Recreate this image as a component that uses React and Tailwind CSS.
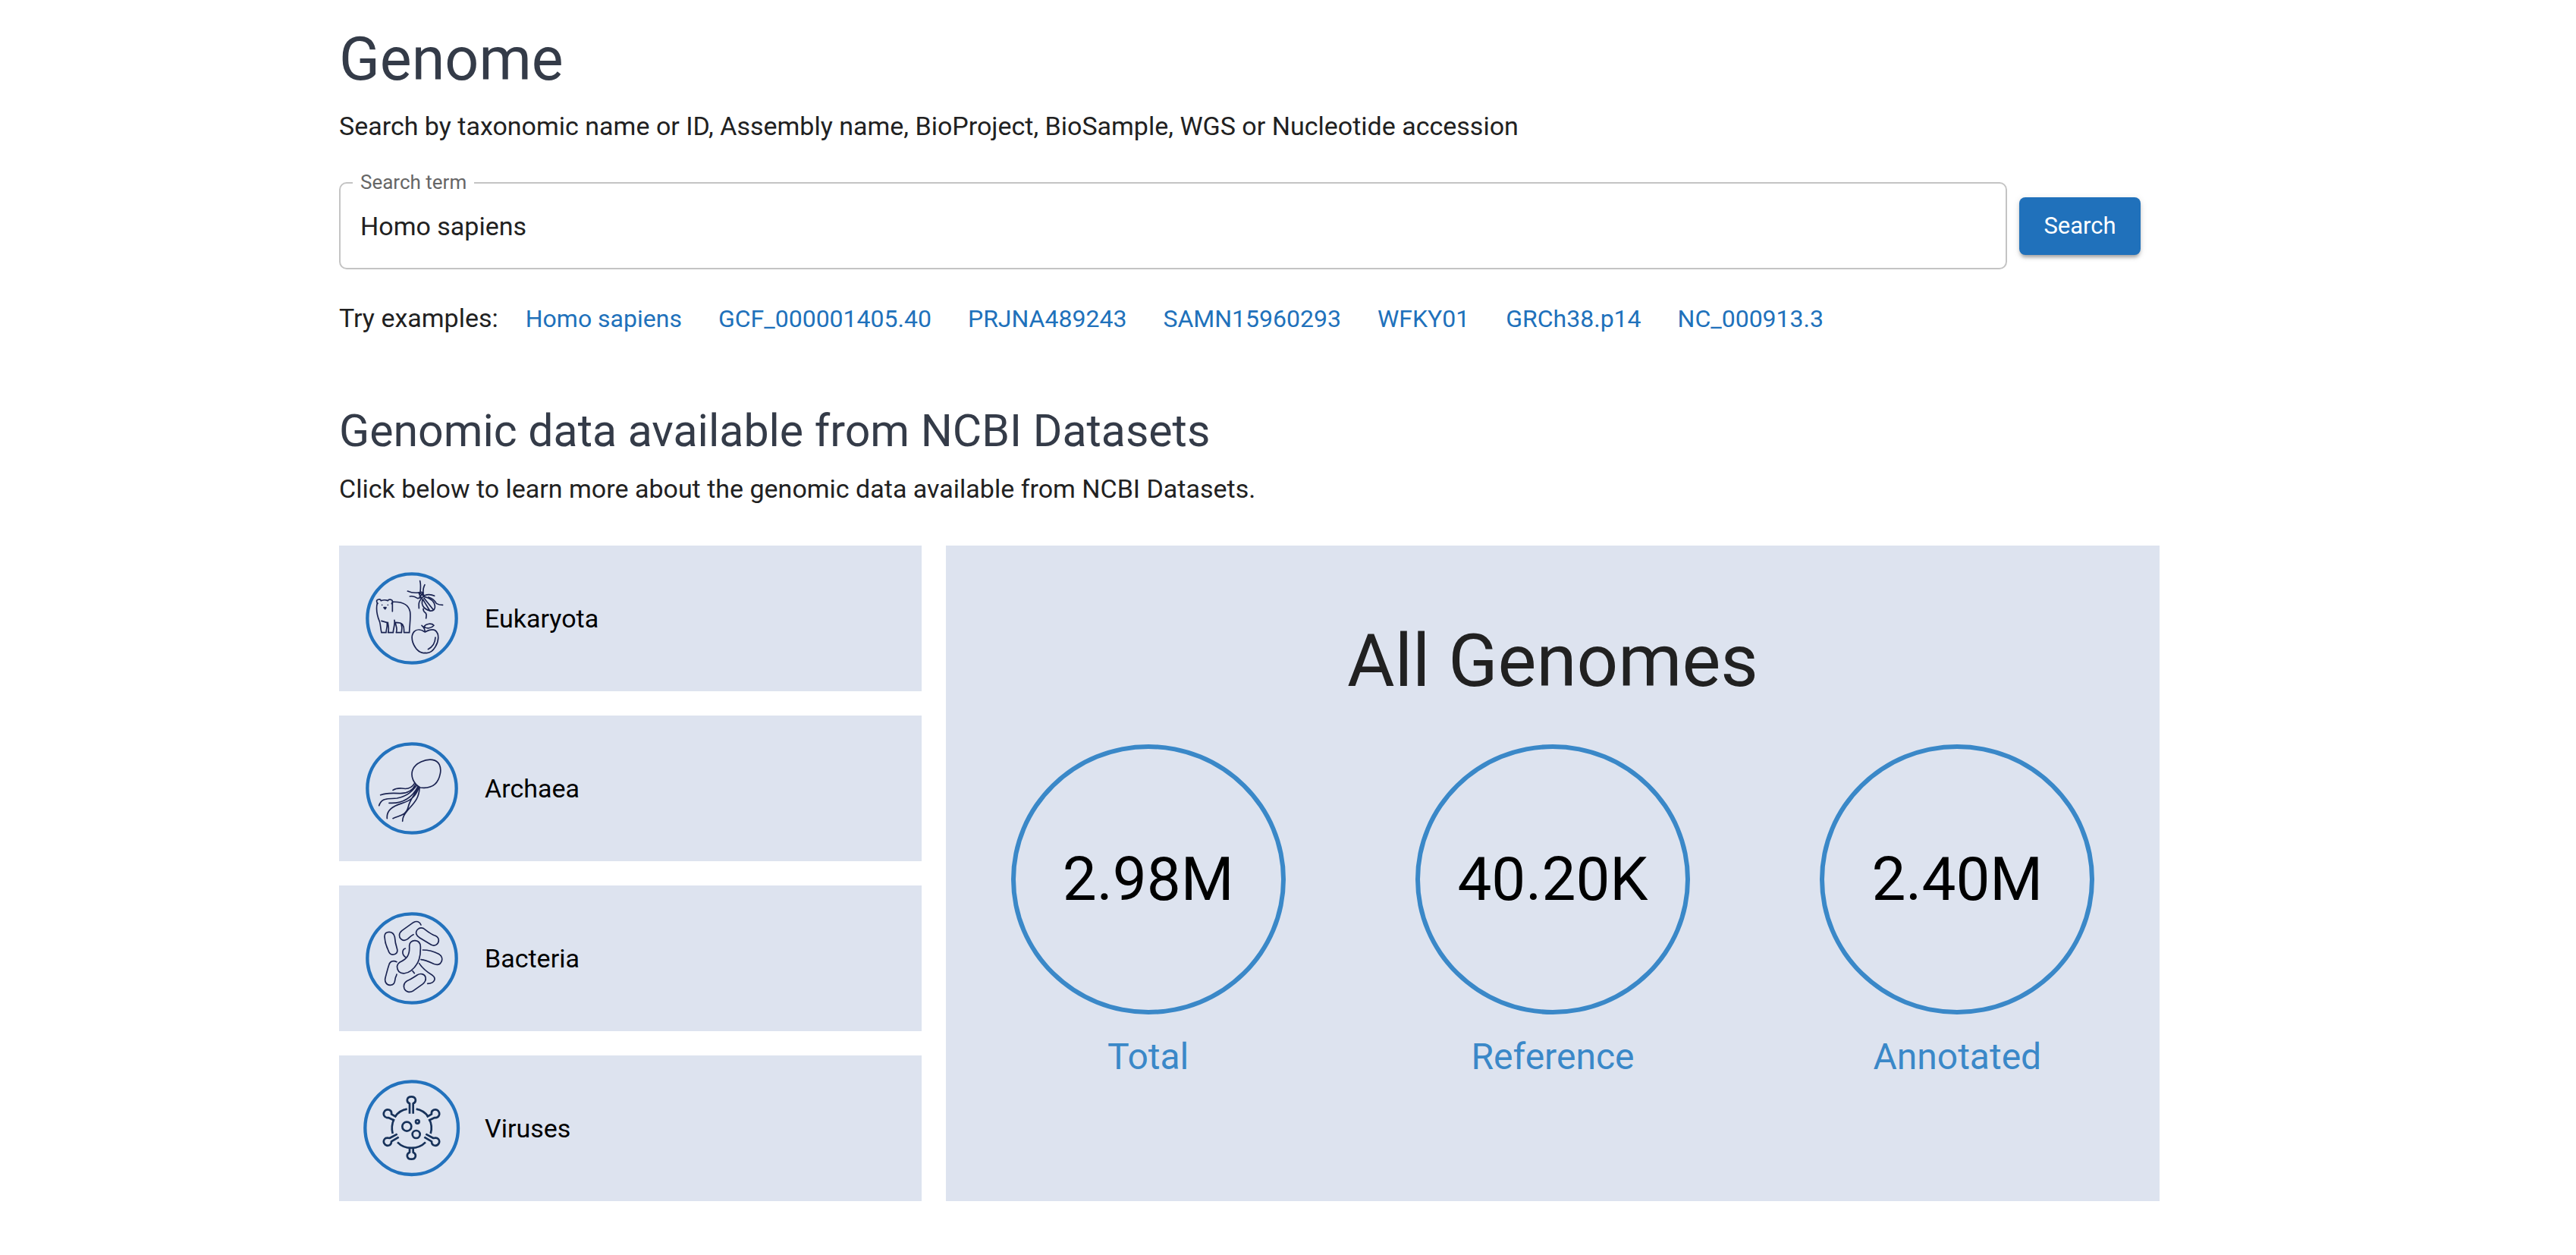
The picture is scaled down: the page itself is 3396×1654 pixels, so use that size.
const examples = [
  "Homo sapiens",
  "GCF_000001405.40",
  "PRJNA489243",
  "SAMN15960293",
  "WFKY01",
  "GRCh38.p14",
  "NC_000913.3",
];

function Icon({ viewBox, ring, children, stroke = "#1b2452", width = 5 }) {
  return (
    <svg viewBox={viewBox} className="size-32 shrink-0" fill="none" strokeLinecap="round" strokeLinejoin="round" aria-hidden="true">
      <circle cx={ring[0]} cy={ring[1]} r={ring[2]} stroke="#2272bd" strokeWidth="13" />
      <g stroke={stroke} strokeWidth={width}>{children}</g>
    </svg>
  );
}

function EukaryotaIcon() {
  return (
    <Icon viewBox="27 18 384 384" ring={[219, 210, 176]}>
      <path d="M84 151C77 143 79 136 87 135C92 134 96 137 97 140C105 137 117 137 124 140C126 134 137 134 141 139C144 144 142 149 139 152" />
      <path d="M82 150C76 175 84 205 91 222C95 232 95 252 99 266H117C117 252 124 242 120 226L99 220M124 226C125 240 130 250 125 266H145C145 250 153 238 150 217M142 145C185 143 206 156 212 184C215 215 209 242 209 266H188C187 252 190 246 182 234C176 226 165 226 153 226C156 240 163 250 157 266H178C178 252 183 245 176 230M142 147V182" />
      <path d="M101 157h.1M124 157h.1" />
      <path d="M108 167h9l-4 6z" fill="#1b2452" />
      <path d="M251 62C254 74 254 88 252 106M270 77C264 88 263 98 264 110M202 102C215 108 230 110 246 108M211 123C220 121 232 124 242 131C248 130 252 128 256 126M256 133C245 142 246 155 247 170M268 120C280 115 295 115 308 121M284 126C300 130 309 139 316 151C324 156 332 157 341 157" />
      <path d="M246 108L258 106L268 120L256 132ZM250 110L266 122M264 110L250 124M262 134C254 155 264 172 290 180C306 182 312 172 310 160C308 144 292 130 268 124M267 130L303 175M262 134L290 180M264 172C263 182 268 184 274 189C279 196 275 203 275 210" />
      <path d="M271 264C258 255 240 250 228 262C212 280 220 310 238 332C250 345 262 348 271 346C285 349 300 342 312 322C326 298 328 272 312 258C300 250 285 256 271 264ZM258 238C266 245 271 254 271 264M267 243C275 230 298 228 306 238C296 250 277 252 267 243ZM312 285C311 305 303 322 283 332" />
    </Icon>
  );
}

function ArchaeaIcon() {
  return (
    <Icon viewBox="27 21 384 384" ring={[219, 213, 176]}>
      <path d="M252 210C225 195 213 165 222 140C232 112 275 96 300 100C328 104 336 130 331 155C324 192 300 216 252 210Z" />
      <path d="M229 194C217 214 200 217 180 213C165 212 150 216 144 220M233 198C222 220 205 234 170 233C140 231 115 232 95 239M238 202C220 225 200 245 160 252C125 256 100 248 89 281M243 206C225 240 190 275 129 271M246 209C238 240 215 262 180 272C140 285 118 300 121 332M249 212C247 252 230 268 202 300C188 318 182 326 182 343M243 212C230 240 212 255 205 285C196 322 168 320 144 332" />
    </Icon>
  );
}

function BacteriaIcon() {
  return (
    <Icon viewBox="27 21 384 384" ring={[219, 213, 176]}>
      <path d="M111 128C110 115 118 109 129 109C141 109 148 116 151 128C152 146 156 162 161 178C163 189 158 196 147 198C137 200 129 194 125 180C117 164 112 146 111 128Z" />
      <path d="M255 81C250 68 238 64 225 71L180 103C165 115 168 130 176 137C183 143 193 143 202 137C210 129 216 123 225 119" />
      <path d="M264 94C245 88 232 105 237 118C239 124 243 128 250 132L296 160C312 167 325 155 325 142C325 134 320 128 312 124C290 116 280 105 264 94Z" />
      <path d="M209 165C208 150 220 142 232 143C246 144 252 152 253 166C254 200 250 235 215 262C200 273 180 277 168 266C157 252 158 236 172 228C200 215 211 200 209 165Z" />
      <path d="M193 174C180 178 178 198 194 209M262 180C290 180 310 188 325 196C337 203 341 215 336 226C330 240 318 240 305 235C290 228 275 220 255 218M159 227C145 220 132 225 128 240C122 258 118 275 114 290C110 305 118 318 132 319C148 320 151 310 153 295C153 288 158 284 159 276M248 233C262 255 280 268 300 280C315 290 312 312 281 313M222 263L229 272" />
      <path d="M240 279C255 270 270 276 273 288C276 300 268 310 260 316L225 341C210 350 195 346 189 333C184 318 190 308 200 302C216 296 227 287 240 279Z" />
    </Icon>
  );
}

function VirusesIcon() {
  return (
    <Icon viewBox="27 24 384 384" ring={[218, 215, 184]} stroke="#17325a" width={8}>
      <g strokeLinecap="butt">
        <path d="M148 180C140 198 138 218 143 237M153 169C165 153 180 143 200 140M236 140C255 143 270 152 283 169M288 180C297 198 299 218 293 237M162 271C190 301 244 301 273 271" />
        <path d="M210 158V118C196 112 197 91 217 91C237 91 238 112 224 118V158M210 293V311C196 317 197 338 217 338C237 338 238 317 224 311V293" />
        <path d="M157 171L138 160C141 143 122 137 112 147C102 160 110 176 126 174L150 185M278 171L297 160C294 143 313 137 323 147C333 160 325 176 309 174L285 185" />
        <path d="M161 239L131 255C113 250 104 262 109 275C116 289 138 288 138 268L167 251M274 239L304 255C322 250 331 262 326 275C319 289 297 288 297 268L268 251" />
        <circle cx="199" cy="209" r="18" />
        <circle cx="241" cy="190" r="7" />
        <circle cx="236" cy="240" r="15" />
      </g>
    </Icon>
  );
}

const groups = [
  { name: "Eukaryota", Art: EukaryotaIcon },
  { name: "Archaea", Art: ArchaeaIcon },
  { name: "Bacteria", Art: BacteriaIcon },
  { name: "Viruses", Art: VirusesIcon },
];

const stats = [
  { value: "2.98M", label: "Total" },
  { value: "40.20K", label: "Reference" },
  { value: "2.40M", label: "Annotated" },
];

export default function App() {
  return (
    <div className="min-h-screen bg-white pr-[102px] font-['Roboto',sans-serif] text-[34px] leading-[48px] text-[#212121]">
      <main className="mx-auto max-w-[2400px] pt-[30px]">
        <h1 className="text-[79px] leading-[96px] text-[#343b48]">Genome</h1>
        <p className="mt-4">Search by taxonomic name or ID, Assembly name, BioProject, BioSample, WGS or Nucleotide accession</p>

        <form className="mt-[50px] flex items-center gap-4 pr-[25px]" onSubmit={(e) => e.preventDefault()}>
          <div className="relative flex-1">
            <label htmlFor="term" className="absolute -top-4 left-[18px] bg-white px-2.5 text-[26px] leading-8 text-[#666]">Search term</label>
            <input id="term" type="text" defaultValue="Homo sapiens" className="block h-[115px] w-full rounded-[10px] border-2 border-[#c4c4c4] px-[26px]" />
          </div>
          <button type="submit" className="h-[76px] w-40 rounded-lg bg-[#2071bb] text-[31px] text-white shadow-[0_6px_4px_-4px_rgba(0,0,0,0.2),0_4px_4px_0_rgba(0,0,0,0.14),0_2px_10px_0_rgba(0,0,0,0.12)]">Search</button>
        </form>

        <div className="mt-10 flex flex-wrap items-baseline gap-x-12">
          <p className="-mr-3">Try examples:</p>
          {examples.map((name) => (
            <a key={name} href="#" className="text-[32px] text-[#2071bb]">{name}</a>
          ))}
        </div>

        <h2 className="mt-[88px] text-[59px] leading-[72px] text-[#343b48]">Genomic data available from NCBI Datasets</h2>
        <p className="mt-4">Click below to learn more about the genomic data available from NCBI Datasets.</p>

        <div className="mt-[51px] grid grid-cols-[768fr_1600fr] gap-8">
          <div className="flex flex-col gap-8">
            {groups.map(({ name, Art }) => (
              <button key={name} type="button" className="flex items-center gap-8 bg-[#dde3ef] p-8 text-left text-black">
                <Art />
                <span>{name}</span>
              </button>
            ))}
          </div>
          <section className="bg-[#dde3ef] pt-24">
            <h3 className="text-center text-[96px] leading-[112px]">All Genomes</h3>
            <div className="mt-[54px] grid grid-cols-3">
              {stats.map(({ value, label }) => (
                <div key={label} className="flex flex-col items-center">
                  <div className="flex h-[356px] w-[362px] items-center justify-center rounded-[50%] border-[6px] border-[#3a88c8]">
                    <span className="text-[80px] text-black">{value}</span>
                  </div>
                  <span className="mt-7 text-[48px] leading-[56px] text-[#3a88c8]">{label}</span>
                </div>
              ))}
            </div>
          </section>
        </div>
      </main>
    </div>
  );
}
